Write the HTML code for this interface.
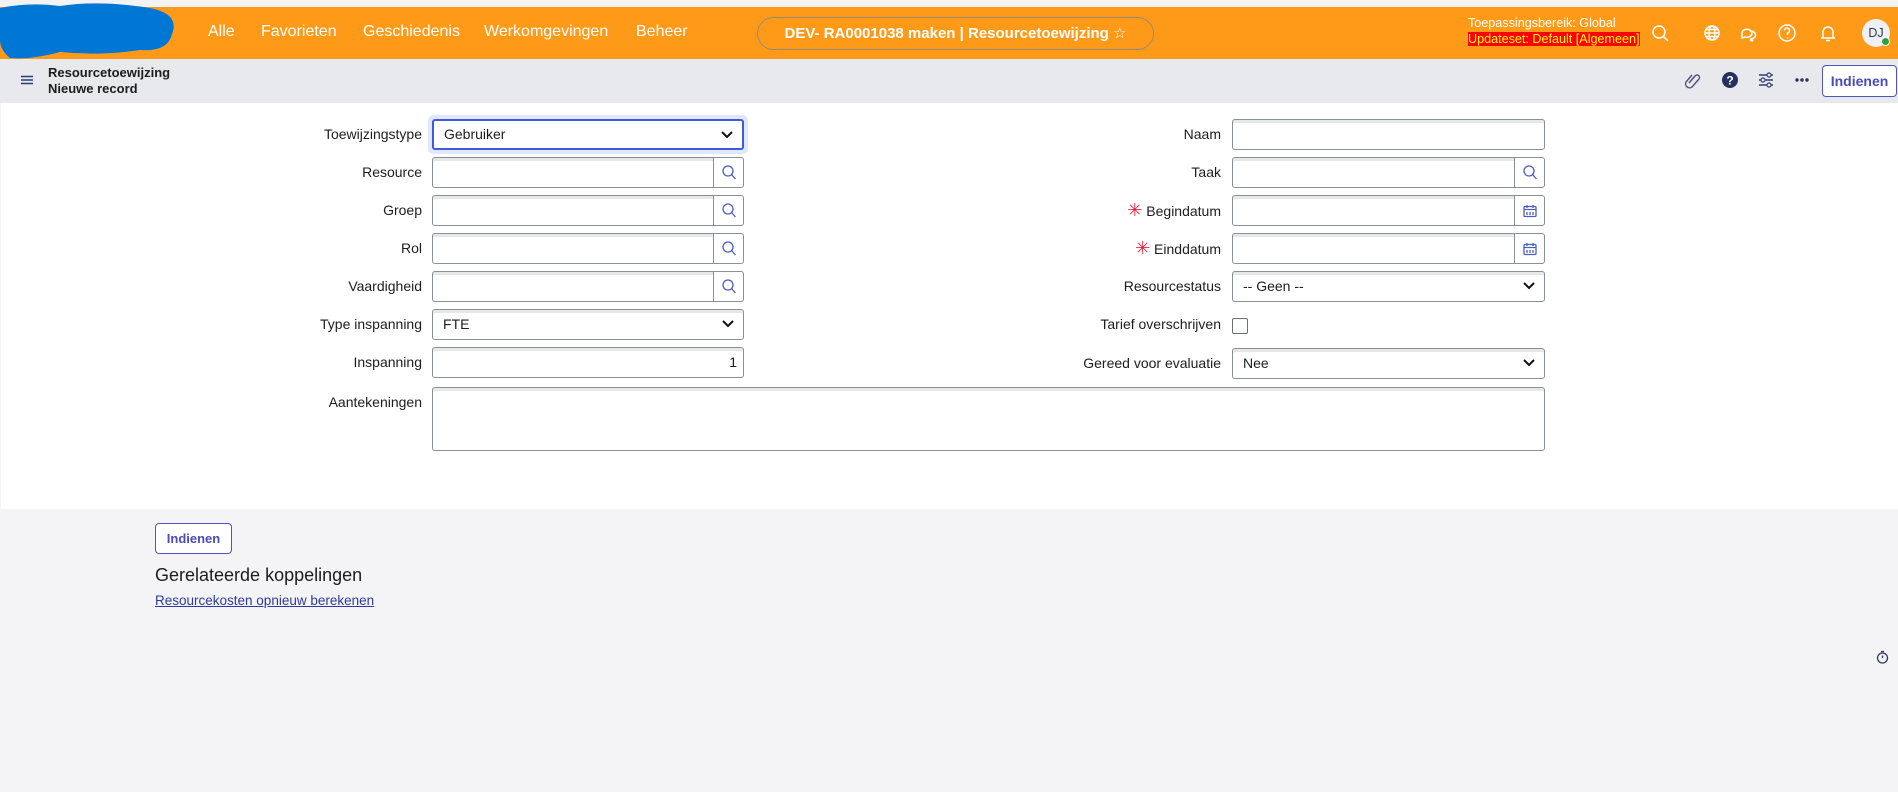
<!DOCTYPE html>
<html><head><meta charset="utf-8"><style>
*{box-sizing:border-box;margin:0;padding:0}
body{width:1898px;height:792px;overflow:hidden;background:#f4f4f6;font-family:"Liberation Sans",sans-serif;color:#1d1d1d;position:relative}
.a{position:absolute}
.nav{left:0;top:7px;width:1898px;height:52px;background:#ff9a19}
.top{left:0;top:0;width:1898px;height:7px;background:#f3f3f3}
.ni{top:23px;color:#fff;font-size:16px}
.bar{left:0;top:59px;width:1898px;height:44px;background:#e8e9ec}
.form{left:1px;top:103px;width:1897px;height:406px;background:#fff}
.lbl{font-size:14px;text-align:right;color:#1d1d1d;line-height:31px}
.in{height:31px;border:1px solid #8a8e96;border-radius:3px;background:#fff;box-shadow:inset 0 3px 0 #e6e7e9;font-size:14px;line-height:29px;padding-left:10px}
.btn{width:31px;height:31px;border:1px solid #8a8e96;border-left:1px solid #8a8e96;border-radius:0 3px 3px 0;background:#fff;display:flex;align-items:center;justify-content:center}
.chev{position:absolute;right:9px;top:10px}
.ast{color:#e0263e;font-size:18px}
</style></head><body>
<div class="a top"></div>
<div class="a nav"></div>
<svg class="a" style="left:0;top:0" width="180" height="64"><path d="M0 8 Q30 2 60 6 Q100 0 150 8 Q180 14 172 34 Q168 52 140 50 Q100 56 60 52 Q30 60 10 58 Q0 50 0 40Z" fill="#0077d4"/></svg>
<div class="a ni" style="left:208px">Alle</div>
<div class="a ni" style="left:261px">Favorieten</div>
<div class="a ni" style="left:363px">Geschiedenis</div>
<div class="a ni" style="left:484px">Werkomgevingen</div>
<div class="a ni" style="left:636px">Beheer</div>
<div class="a" style="left:757px;top:17px;width:397px;height:33px;border:1px solid #9a8a7a;border-radius:17px;color:#fff;font-weight:bold;font-size:15px;text-align:center;line-height:31px">DEV- RA0001038 maken | Resourcetoewijzing <span style="font-weight:normal">☆</span></div>
<div class="a" style="left:1468px;top:15px;color:#fff;font-size:12.6px;line-height:16px">Toepassingsbereik: Global<br><span style="background:#f00;color:#ff0">Updateset: Default [Algemeen]</span></div>
<svg class="a" style="left:1650px;top:22px" width="240" height="24" fill="none" stroke="#fff" stroke-width="1.5">
<circle cx="9" cy="10" r="6"/><path d="M13.5 14.5L18 19"/>
<circle cx="62" cy="11" r="7"/><ellipse cx="62" cy="11" rx="3" ry="7"/><path d="M55 11h14M56 7.5h12M56 14.5h12"/>
<path d="M92 12a5 4 0 1 1 3 3l-3 1z"/><path d="M100 9a5 4 0 1 1 1 8l2 2-3-1"/>
<circle cx="137" cy="11" r="8"/><path d="M134.5 8.5a2.5 2.5 0 1 1 3 2.5v2M137.5 15.5v1"/>
<path d="M173 16V10a5 5 0 0 1 10 0v6h2H171M176 18.5h4"/>
</svg>
<div class="a" style="left:1862px;top:19px;width:28px;height:28px;border-radius:50%;background:#eef0f3;font-size:12.5px;color:#2e3a5c;text-align:center;line-height:28px">DJ</div>
<div class="a" style="left:1881px;top:37px;width:9px;height:9px;border-radius:50%;background:#2aa23b;border:1.5px solid #fff"></div>
<div class="a bar"></div>
<svg class="a" style="left:21px;top:75px" width="12" height="10" stroke="#2e3a7c" stroke-width="1.4"><path d="M0 1.5h12M0 5h12M0 8.5h12"/></svg>
<div class="a" style="left:48px;top:65px;font-size:13px;font-weight:bold;line-height:16px;color:#1d1d1d">Resourcetoewijzing<br>Nieuwe record</div>
<svg class="a" style="left:1684px;top:70px" width="130" height="22" fill="none" stroke="#4a4f7a" stroke-width="1.4">
<path d="M5 13l6-7a2.5 2.5 0 0 1 4 3l-7 8a4 4 0 0 1-6-5l6-7"/>
<circle cx="46" cy="10" r="8" fill="#25305f" stroke="none"/><text x="46" y="14.5" font-size="12" font-weight="bold" fill="#fff" stroke="none" text-anchor="middle" font-family="Liberation Sans">?</text>
<path d="M75 5h14M75 10h14M75 15h14" stroke="#2e3a7c"/><circle cx="85" cy="5" r="2" fill="#e8e9ec"/><circle cx="79" cy="10" r="2" fill="#e8e9ec"/><circle cx="85" cy="15" r="2" fill="#e8e9ec"/>
<g fill="#25305f" stroke="none"><circle cx="113" cy="10" r="1.7"/><circle cx="118" cy="10" r="1.7"/><circle cx="123" cy="10" r="1.7"/></g>
</svg>
<div class="a" style="left:1822px;top:65px;width:75px;height:32px;border:1px solid #5252c0;border-radius:4px;background:#fff;color:#4a4ab8;font-weight:bold;font-size:14px;text-align:center;line-height:30px">Indienen</div>
<div class="a form"></div>

<div class="a lbl" style="left:200px;width:222px;top:119px">Toewijzingstype</div>
<div class="a" style="left:428px;top:115px;width:320px;height:39px;border-radius:5px;background:#e3e7fb"></div>
<div class="a in" style="left:432px;top:119px;width:312px;border:2px solid #3d5ae0;box-shadow:none;line-height:27px">Gebruiker<svg class="chev" width="12" height="8"><path d="M1 1l5 5 5-5" fill="none" stroke="#111" stroke-width="2"/></svg></div>

<div class="a lbl" style="left:200px;width:222px;top:157px">Resource</div>
<div class="a in" style="left:432px;top:157px;width:282px;border-radius:3px 0 0 3px"></div>
<div class="a btn" style="left:713px;top:157px"><svg width="14" height="15" fill="none" stroke="#4b5fc0" stroke-width="1.3"><circle cx="6" cy="6" r="5"/><path d="M9.5 9.5l4 4.5"/></svg></div>
<div class="a lbl" style="left:200px;width:222px;top:195px">Groep</div>
<div class="a in" style="left:432px;top:195px;width:282px;border-radius:3px 0 0 3px"></div>
<div class="a btn" style="left:713px;top:195px"><svg width="14" height="15" fill="none" stroke="#4b5fc0" stroke-width="1.3"><circle cx="6" cy="6" r="5"/><path d="M9.5 9.5l4 4.5"/></svg></div>
<div class="a lbl" style="left:200px;width:222px;top:233px">Rol</div>
<div class="a in" style="left:432px;top:233px;width:282px;border-radius:3px 0 0 3px"></div>
<div class="a btn" style="left:713px;top:233px"><svg width="14" height="15" fill="none" stroke="#4b5fc0" stroke-width="1.3"><circle cx="6" cy="6" r="5"/><path d="M9.5 9.5l4 4.5"/></svg></div>
<div class="a lbl" style="left:200px;width:222px;top:271px">Vaardigheid</div>
<div class="a in" style="left:432px;top:271px;width:282px;border-radius:3px 0 0 3px"></div>
<div class="a btn" style="left:713px;top:271px"><svg width="14" height="15" fill="none" stroke="#4b5fc0" stroke-width="1.3"><circle cx="6" cy="6" r="5"/><path d="M9.5 9.5l4 4.5"/></svg></div>
<div class="a lbl" style="left:200px;width:222px;top:309px">Type inspanning</div>
<div class="a in" style="left:432px;top:309px;width:312px">FTE<svg class="chev" width="12" height="8"><path d="M1 1l5 5 5-5" fill="none" stroke="#111" stroke-width="2"/></svg></div>
<div class="a lbl" style="left:200px;width:222px;top:347px">Inspanning</div>
<div class="a in" style="left:432px;top:347px;width:312px;text-align:right;padding-right:6px">1</div>
<div class="a lbl" style="left:200px;width:222px;top:389px;line-height:27px">Aantekeningen</div>
<div class="a in" style="left:432px;top:387px;width:1113px;height:64px"></div>

<div class="a lbl" style="left:1000px;width:221px;top:119px">Naam</div>
<div class="a in" style="left:1232px;top:119px;width:313px"></div>
<div class="a lbl" style="left:1000px;width:221px;top:157px">Taak</div>
<div class="a in" style="left:1232px;top:157px;width:283px;border-radius:3px 0 0 3px"></div>
<div class="a btn" style="left:1514px;top:157px"><svg width="14" height="15" fill="none" stroke="#4b5fc0" stroke-width="1.3"><circle cx="6" cy="6" r="5"/><path d="M9.5 9.5l4 4.5"/></svg></div>
<div class="a lbl" style="left:1000px;width:221px;top:195px"><span class="ast">✳</span> Begindatum</div>
<div class="a in" style="left:1232px;top:195px;width:283px;border-radius:3px 0 0 3px"></div>
<div class="a btn" style="left:1514px;top:195px"><svg width="14" height="14" fill="none" stroke="#4b5fc0" stroke-width="1.3"><rect x="1" y="2.5" width="12" height="10" rx="1"/><path d="M1 5.5h12M4 1v3M10 1v3M4 8v3M7 8v3M10 8v3"/></svg></div>
<div class="a lbl" style="left:1000px;width:221px;top:233px"><span class="ast">✳</span> Einddatum</div>
<div class="a in" style="left:1232px;top:233px;width:283px;border-radius:3px 0 0 3px"></div>
<div class="a btn" style="left:1514px;top:233px"><svg width="14" height="14" fill="none" stroke="#4b5fc0" stroke-width="1.3"><rect x="1" y="2.5" width="12" height="10" rx="1"/><path d="M1 5.5h12M4 1v3M10 1v3M4 8v3M7 8v3M10 8v3"/></svg></div>
<div class="a lbl" style="left:1000px;width:221px;top:271px">Resourcestatus</div>
<div class="a in" style="left:1232px;top:271px;width:313px">-- Geen --<svg class="chev" width="12" height="8"><path d="M1 1l5 5 5-5" fill="none" stroke="#111" stroke-width="2"/></svg></div>
<div class="a lbl" style="left:1000px;width:221px;top:309px">Tarief overschrijven</div>
<div class="a" style="left:1232px;top:318px;width:16px;height:16px;border:1px solid #6b6f78;border-radius:2px;background:#fff"></div>
<div class="a lbl" style="left:1000px;width:221px;top:348px">Gereed voor evaluatie</div>
<div class="a in" style="left:1232px;top:348px;width:313px">Nee<svg class="chev" width="12" height="8"><path d="M1 1l5 5 5-5" fill="none" stroke="#111" stroke-width="2"/></svg></div>

<div class="a" style="left:155px;top:523px;width:77px;height:31px;border:1px solid #5252c0;border-radius:4px;background:#fff;color:#4a4ab8;font-weight:bold;font-size:13px;text-align:center;line-height:29px">Indienen</div>
<div class="a" style="left:155px;top:565px;font-size:18px;color:#1d1d1d">Gerelateerde koppelingen</div>
<div class="a" style="left:155px;top:593px;font-size:13.5px;color:#2e3a9c;text-decoration:underline">Resourcekosten opnieuw berekenen</div>
<svg class="a" style="left:1876px;top:650px" width="13" height="14" fill="none" stroke="#2e3a5c" stroke-width="1.3"><circle cx="6.5" cy="8" r="5"/><path d="M6.5 8V5.5M5 1.5h3"/></svg>
</body></html>
